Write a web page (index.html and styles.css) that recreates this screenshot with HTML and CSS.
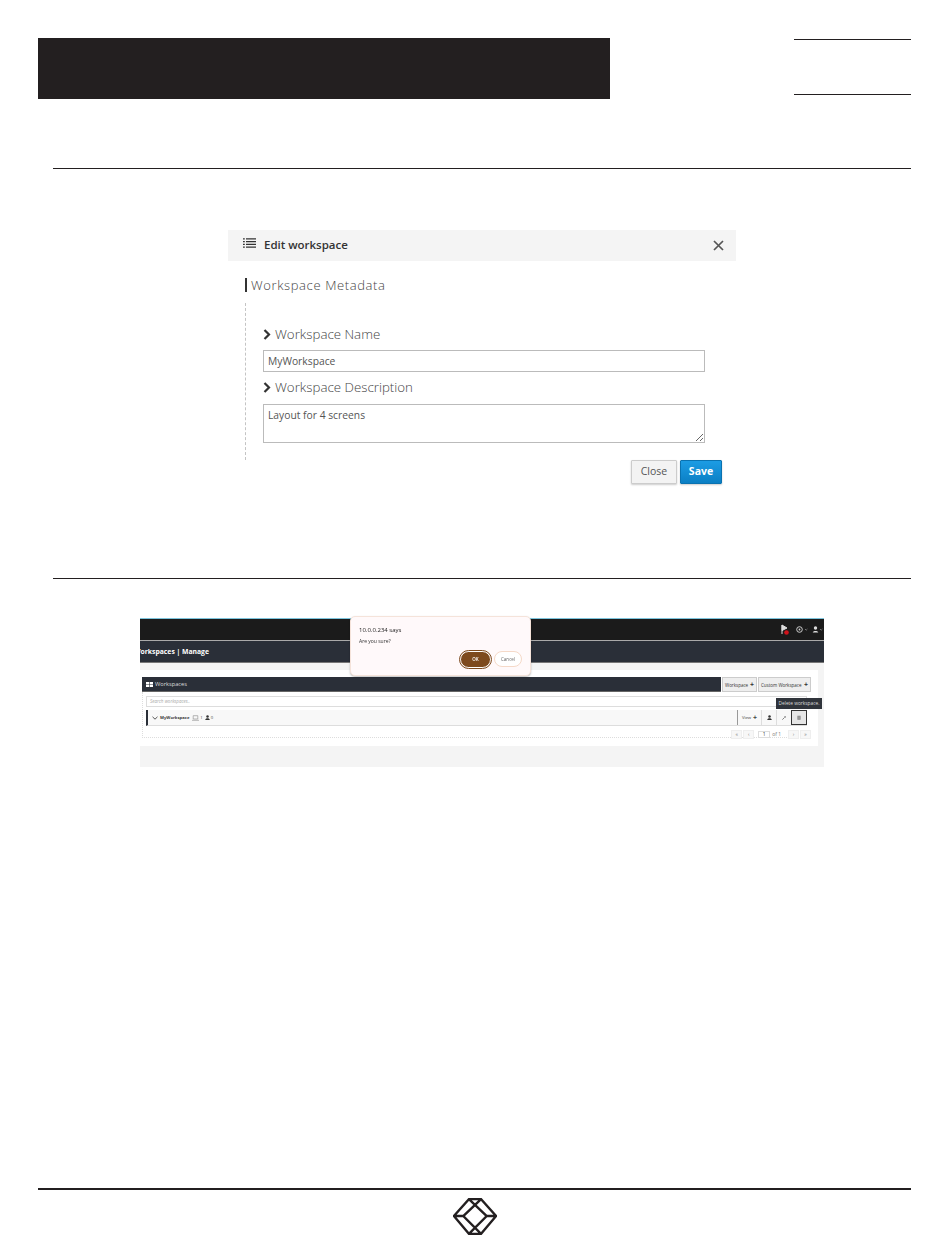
FILE: index.html
```html
<!DOCTYPE html>
<html lang="en">
<head>
<meta charset="utf-8">
<title>Edit workspace</title>
<link rel="stylesheet" href="styles.css">
</head>
<body>
<div class="page">
  <header class="top">
    <div class="black-block"></div>
    <div class="side-box"></div>
  </header>
  <hr class="rule rule-first">

  <section class="modal">
    <div class="modal-head">
      <svg class="list-icon" viewBox="0 0 13 10" width="13" height="10"><path d="M0 .8h1.800M0 3.600h1.800M0 6.400h1.800M0 9.200h1.800M3 .8h10M3 3.600h10M3 6.400h10M3 9.200h10" stroke="#333" stroke-width="1.200" fill="none"/></svg>
      <span class="modal-title">Edit workspace</span>
      <svg class="close-icon" viewBox="0 0 11 11" width="11" height="11"><path d="M1 1l9 9M10 1l-9 9" stroke="#555" stroke-width="1.700" fill="none"/></svg>
    </div>
    <h2 class="meta-title">Workspace Metadata</h2>
    <div class="fields">
      <label class="field-label field-label-first">
        <svg class="chev" viewBox="0 0 8 11" width="8" height="11"><path d="M1.500 1l4.500 4.500L1.500 10" stroke="#333" stroke-width="2.200" fill="none"/></svg>
        Workspace Name
      </label>
      <input class="text-input" type="text" value="MyWorkspace">
      <label class="field-label field-label-second">
        <svg class="chev" viewBox="0 0 8 11" width="8" height="11"><path d="M1.500 1l4.500 4.500L1.500 10" stroke="#333" stroke-width="2.200" fill="none"/></svg>
        Workspace Description
      </label>
      <textarea class="text-area">Layout for 4 screens</textarea>
    </div>
    <div class="modal-actions">
      <button class="btn btn-close">Close</button>
      <button class="btn btn-save">Save</button>
    </div>
  </section>

  <hr class="rule rule-second">

  <section class="app">
    <div class="app-top">
      <svg class="tb-flag" viewBox="0 0 10 11" width="10" height="11"><path d="M2 1v9M2 1l5 3-5 2.500z" stroke="#ddd" stroke-width="1" fill="#ddd"/><circle cx="6.500" cy="8.500" r="2.300" fill="#d0121b"/></svg>
      <svg class="tb-help" viewBox="0 0 12 7" width="12" height="7"><circle cx="3.500" cy="3.500" r="2.800" stroke="#ccc" stroke-width="1" fill="none"/><circle cx="3.500" cy="3.500" r=".9" fill="#ccc"/><path d="M9 3l1.200 1.200L11.400 3" stroke="#999" stroke-width=".7" fill="none"/></svg>
      <svg class="tb-user" viewBox="0 0 11 7" width="11" height="7"><circle cx="3.500" cy="2" r="1.700" fill="#ddd"/><path d="M.8 6.500c0-2 5.400-2 5.400 0z" fill="#ddd"/><path d="M8 3l1.200 1.200L10.400 3" stroke="#999" stroke-width=".7" fill="none"/></svg>
    </div>
    <div class="app-nav"><span class="nav-title">Workspaces | Manage</span></div>
    <div class="app-body">
      <div class="panel">
        <div class="panel-head">
          <div class="panel-title">
            <svg viewBox="0 0 7 5" width="7" height="5"><path d="M0 0h3.200v2.200H0zM3.800 0H7v2.200H3.800zM0 2.800h3.200V5H0zM3.800 2.800H7V5H3.800z" fill="#fff"/></svg>
            Workspaces
          </div>
          <div class="head-btn head-btn-a">Workspace <b>+</b></div>
          <div class="head-btn head-btn-b">Custom Workspace <b>+</b></div>
        </div>
        <div class="panel-inner">
          <div class="search">Search workspaces..</div>
          <div class="ws-row">
            <svg class="ws-chev" viewBox="0 0 6 4" width="6" height="4"><path d="M.5 .8L3 3.200 5.500 .8" stroke="#444" stroke-width=".9" fill="none"/></svg>
            <span class="ws-name">MyWorkspace</span>
            <svg class="ws-ico" viewBox="0 0 7 6" width="7" height="6"><path d="M1.200 .7h4.600v3.300H1.200zM0 5.300h7" stroke="#888" stroke-width=".6" fill="none"/></svg>
            <span class="ws-num">1</span>
            <svg class="ws-ico" viewBox="0 0 6 6" width="5" height="5"><circle cx="3" cy="1.700" r="1.500" fill="#333"/><path d="M.3 6c0-2.800 5.400-2.800 5.400 0z" fill="#333"/></svg>
            <span class="ws-num">0</span>
            <div class="ws-actions">
              <div class="ws-btn ws-view">View <b>+</b></div>
              <div class="ws-btn">
                <svg viewBox="0 0 6 6" width="5" height="5"><circle cx="3" cy="1.700" r="1.500" fill="#333"/><path d="M.3 6c0-2.800 5.400-2.800 5.400 0z" fill="#333"/></svg>
              </div>
              <div class="ws-btn">
                <svg viewBox="0 0 6 6" width="4" height="4"><path d="M.5 5.500L3.500 2.500" stroke="#444" stroke-width="1"/><path d="M3 1.200L4.800 3 5.800 .2z" fill="#444"/></svg>
              </div>
              <div class="ws-btn ws-trash">
                <svg viewBox="0 0 6 6" width="4" height="5"><path d="M1 1.500h4V6H1zM.5 .8h5" stroke="#777" stroke-width=".7" fill="#999"/></svg>
              </div>
            </div>
          </div>
          <div class="pager">
            <span class="pg-btn">«</span><span class="pg-btn">‹</span>
            <span class="pg-input">1</span><span class="pg-of">of 1</span>
            <span class="pg-btn">›</span><span class="pg-btn">»</span>
          </div>
        </div>
      </div>
    </div>
    <div class="tooltip">Delete workspace.</div>
    <div class="confirm">
      <div class="confirm-title">10.0.0.234 says</div>
      <div class="confirm-text">Are you sure?</div>
      <div class="confirm-actions">
        <span class="confirm-ok">OK</span>
        <span class="confirm-cancel">Cancel</span>
      </div>
    </div>
  </section>

  <footer class="foot">
    <svg class="logo" viewBox="0 0 47 39" width="44" height="37">
      <path d="M17 1h13l16 18-16 19H17L1 19z M17 1l19 18-19 19 M30 1L11 19l19 19 M1 19h10 M36 19h10" stroke="#231f20" stroke-width="2.500" fill="none"/>
    </svg>
  </footer>
</div>
</body>
</html>
```
FILE: styles.css
```css
* { box-sizing: border-box; }
html, body { margin: 0; padding: 0; background: #fff; }
body { font-family: "Open Sans", "Liberation Sans", sans-serif; color: #333; }
.page { width: 950px; height: 1241px; padding-top: 38px; overflow: hidden; display: flex; flex-direction: column; }

.top { display: flex; justify-content: space-between; padding: 0 39px 0 38px; height: 61px; flex: none; }
.black-block { width: 572px; height: 61px; background: #231f20; }
.side-box { width: 117px; height: 56px; margin-top: 1px; border-top: 1px solid #231f20; border-bottom: 1px solid #231f20; }

.rule { border: 0; height: 1px; background: #231f20; margin: 0 39px 0 53px; flex: none; }
.rule-first { margin-top: 69px; }
.rule-second { margin-top: 94px; }

.modal { width: 508px; margin: 61px 0 0 228px; flex: none; }
.modal-head { height: 31px; background: #f4f4f4; display: flex; align-items: center; padding: 0 12px 0 15px; }
.list-icon { margin: -5px 8px 0 0; }
.modal-title { font-size: 11.500px; font-weight: 600; color: #333; flex: 1; margin: -2px 0 0; letter-spacing: -.02px; }
.close-icon { margin-top: -1px; }
.meta-title { margin: 17px 0 0 17px; height: 14px; border-left: 2px solid #333; padding-left: 4px; font-size: 13px; line-height: 14px; font-weight: 300; color: #444; letter-spacing: .62px; white-space: nowrap; }
.fields { margin: 11px 0 0 17px; height: 157px; border-left: 1px dashed #c4c4c4; padding-left: 17px; display: flex; flex-direction: column; }
.field-label { display: flex; align-items: center; gap: 4px; height: 20px; font-size: 13.300px; font-weight: 300; color: #444; }
.chev { flex: none; }
.field-label-first { margin-top: 21px; }
.field-label-second { margin-top: 5px; }
.text-input { width: 442px; height: 22px; margin-top: 6px; border: 1px solid #bbb; padding: 0 4px; font: 400 10.300px "Open Sans", sans-serif; color: #555; background: #fff; border-radius: 0; flex: none; }
.text-area { width: 442px; height: 39px; margin-top: 7px; border: 1px solid #bbb; padding: 3px 4px; font: 400 10.300px "Open Sans", sans-serif; color: #555; background: #fff; border-radius: 0; display: block; flex: none; outline: 0; }
.modal-actions { display: flex; justify-content: flex-end; gap: 3px; padding-right: 14px; }
.btn { height: 24px; border-radius: 1px; font: 400 10.500px "Open Sans", sans-serif; padding: 0 0 2px; }
.btn-close { width: 46px; background: #f3f3f3; border: 1px solid #ccc; color: #555; box-shadow: 0 1px 2px rgba(0,0,0,.2); }
.btn-save { width: 42px; background: linear-gradient(#1c9ce4, #0b7fc4); border: 1px solid #0a72b0; color: #fff; font-weight: 700; box-shadow: 0 1px 2px rgba(0,0,0,.2); }

.app { position: relative; width: 684px; height: 149px; margin: 39px 0 0 140px; border-top: 1px solid #7cc4dc; background: #f4f4f4; flex: none; display: flex; flex-direction: column; filter: blur(.3px); }
.app-top { height: 21px; background: #1b1b1b; display: flex; align-items: center; justify-content: flex-end; padding-right: 1px; flex: none; }
.tb-flag { margin-right: 6px; }
.tb-help { margin-right: 4px; }
.app-nav { height: 23px; background: #2a2f38; border-top: 1px solid #aaa; border-bottom: 1px solid #777; overflow: hidden; display: flex; align-items: center; flex: none; }
.nav-title { margin-left: -6px; font-size: 6.800px; font-weight: 700; color: #fff; white-space: nowrap; }
.app-body { flex: none; padding: 7px 0 0 0; }
.panel { width: 678px; height: 76px; background: #fff; padding: 7px 7px 0 2px; }
.panel-head { display: flex; height: 15px; gap: 1px; }
.panel-title { width: 579px; background: #2a2f38; border-bottom: 1px solid #666; color: #ddd; font-size: 5.700px; display: flex; align-items: center; gap: 2px; padding-left: 4px; }
.head-btn { background: #eee; border: 1px solid #ccc; font-size: 4.500px; color: #333; display: flex; align-items: center; justify-content: space-between; padding: 0 2px; white-space: nowrap; }
.head-btn b { font-size: 7px; line-height: 1; }
.head-btn-a { width: 35px; }
.head-btn-b { width: 53px; }
.panel-inner { width: 665px; height: 46px; border-left: 1px dotted #ddd; padding: 4px 0 0 3px; border-bottom: 1px dotted #ddd; }
.search { height: 11px; border: 1px solid #ddd; font-size: 4.500px; font-style: italic; color: #aaa; line-height: 9px; padding-left: 3px; }
.ws-row { height: 16px; margin-top: 3px; background: #f8f8f8; border-left: 2px solid #2a2f38; border-bottom: 1px solid #ddd; display: flex; align-items: center; padding-left: 4px; font-size: 4.200px; color: #444; }
.ws-chev { margin-right: 2px; }
.ws-name { font-weight: 700; margin-right: 3px; color: #3a3a3a; }
.ws-ico { margin-right: 1px; }
.ws-num { margin-right: 2px; }
.ws-actions { margin-left: auto; display: flex; height: 100%; }
.ws-btn { width: 15px; display: flex; align-items: center; justify-content: center; border-left: 1px solid #ddd; }
.ws-view { width: 24px; gap: 2px; font-size: 4.200px; border-left: 1px solid #999; }
.ws-view b { font-size: 7px; line-height: 1; }
.ws-trash { width: 16px; border: 1px solid #333; background: #e6e6e6; }
.pager { display: flex; justify-content: flex-end; align-items: center; height: 10px; margin: 3px -4px 0 0; font-size: 5px; color: #777; }
.pg-btn { width: 11px; height: 9px; margin-left: 1px; border: 1px solid #eee; background: #f7f7f7; display: flex; align-items: center; justify-content: center; line-height: 1; }
.pg-input { width: 12px; height: 7px; margin-left: 4px; border: 1px solid #ddd; background: #fff; text-align: center; line-height: 5px; color: #333; }
.pg-of { margin: 0 6px 0 2px; }

.tooltip { position: absolute; left: 636px; top: 79px; width: 46px; height: 11px; background: #30343b; color: #ddd; font-size: 4.800px; line-height: 11px; text-align: center; white-space: nowrap; }
.confirm { position: absolute; left: 210px; top: -3px; width: 181px; height: 60px; background: #fff9fa; border: 1px solid #f5e3da; border-radius: 5px; box-shadow: 0 1px 2px rgba(0,0,0,.25); padding: 9px 8px 0; }
.confirm-title { font-size: 6px; line-height: 8px; color: #222; }
.confirm-text { font-size: 5px; line-height: 6px; margin-top: 4px; color: #333; }
.confirm-actions { display: flex; justify-content: flex-end; gap: 2px; margin-top: 7px; }
.confirm-ok { width: 31px; height: 17px; border-radius: 9px; background: #7d4a1e; border: 1px solid #fff; outline: 1px solid #7d4a1e; color: #fff; font-size: 4.500px; font-weight: 600; line-height: 15px; text-align: center; }
.confirm-cancel { width: 28px; height: 16px; border-radius: 8px; background: #fff; border: 1px solid #f5d9c8; color: #666; font-size: 4.500px; line-height: 14px; text-align: center; margin-left: 1px; }

.foot { margin: 421px 39px 0 38px; border-top: 2px solid #231f20; height: 52px; flex: none; display: flex; justify-content: center; padding-top: 8px; }
.logo { flex: none; }
```
